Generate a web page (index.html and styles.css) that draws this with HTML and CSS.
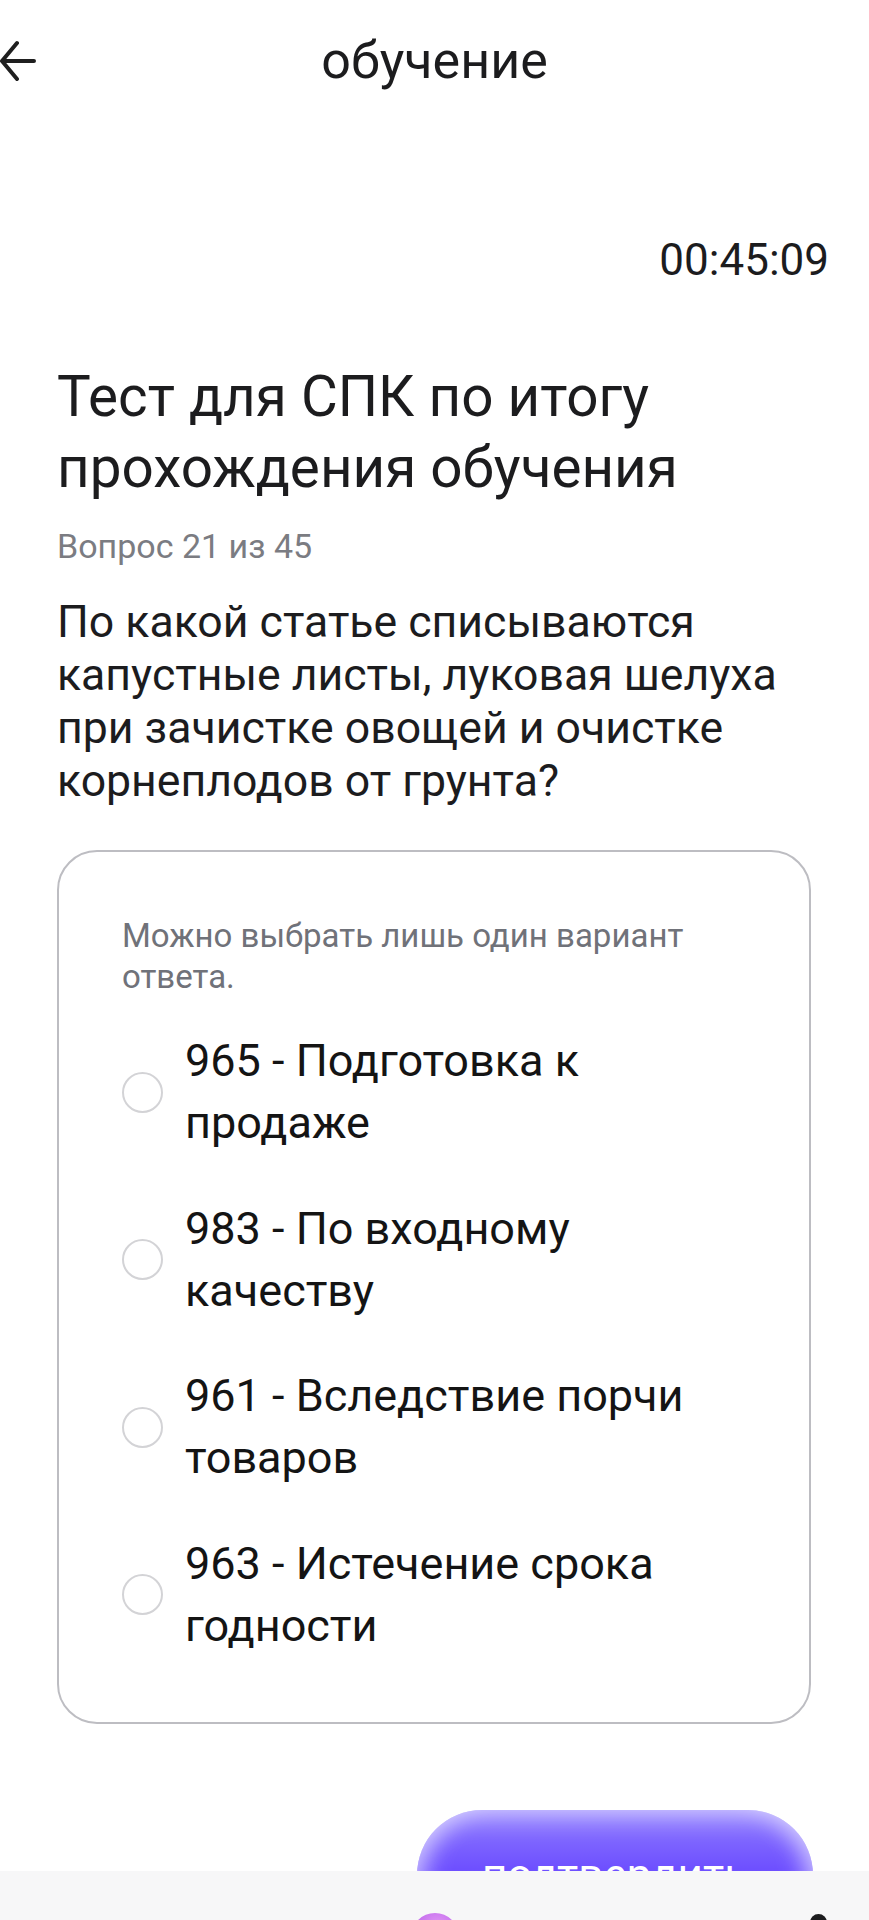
FILE: index.html
```html
<!DOCTYPE html>
<html lang="ru">
<head>
<meta charset="utf-8">
<title>обучение</title>
<link rel="stylesheet" href="styles.css">
</head>
<body>
<header class="topbar">
  <div class="topbar-side">
    <svg class="back" width="40" height="44" viewBox="0 0 40 44" aria-hidden="true">
      <path d="M34 22H2M17 4L2 22L17 40" fill="none" stroke="#1f1f1f" stroke-width="4" stroke-linecap="round" stroke-linejoin="round"/>
    </svg>
  </div>
  <h1 class="topbar-title">обучение</h1>
  <div class="topbar-side"></div>
</header>

<div class="timer">00:45:09</div>

<main class="content">
  <h2 class="test-title">Тест для СПК по итогу прохождения обучения</h2>
  <p class="counter">Вопрос 21 из 45</p>
  <p class="question">По какой статье списываются капустные листы, луковая шелуха при зачистке овощей и очистке корнеплодов от грунта?</p>

  <section class="card">
    <p class="hint">Можно выбрать лишь один вариант ответа.</p>
    <ul class="options">
      <li class="option"><span class="radio"></span><span class="option-text">965 - Подготовка к продаже</span></li>
      <li class="option"><span class="radio"></span><span class="option-text">983 - По входному качеству</span></li>
      <li class="option"><span class="radio"></span><span class="option-text">961 - Вследствие порчи товаров</span></li>
      <li class="option"><span class="radio"></span><span class="option-text">963 - Истечение срока годности</span></li>
    </ul>
  </section>

  <div class="actions">
    <button class="confirm" type="button">подтвердить</button>
  </div>
</main>

<nav class="tabbar">
  <span class="tab"></span>
  <span class="tab"></span>
  <span class="tab"><span class="tab-bubble"></span></span>
  <span class="tab"></span>
  <span class="tab"><span class="tab-head"></span></span>
</nav>
</body>
</html>
```

FILE: styles.css
```css
* { box-sizing: border-box; }

html, body {
  margin: 0;
  padding: 0;
  background: #ffffff;
}

body {
  font-family: Roboto, "Noto Sans", "Liberation Sans", sans-serif;
  color: #1c1c1e;
  width: 869px;
  min-height: 1920px;
}

.topbar {
  display: grid;
  grid-template-columns: 1fr auto 1fr;
  align-items: center;
  height: 122px;
}

.topbar-side {
  display: flex;
  align-items: center;
}

.back {
  display: block;
}

.topbar-title {
  margin: 0;
  font-size: 52px;
  font-weight: 400;
  line-height: 60px;
  color: #1c1c1e;
}

.timer {
  margin-top: 113px;
  padding-right: 40px;
  text-align: right;
  font-size: 44px;
  line-height: 50px;
  color: #1c1c1e;
}

.content {
  padding: 0 58px 0 57px;
}

.test-title {
  margin: 76px 0 0;
  font-size: 56.6px;
  font-weight: 400;
  line-height: 71px;
  color: #1c1c1e;
}

.counter {
  margin: 23px 0 0;
  font-size: 34px;
  line-height: 40px;
  color: #7b7c82;
}

.question {
  margin: 30px 0 0;
  font-size: 44.6px;
  line-height: 53px;
  color: #1c1c1e;
}

.card {
  margin-top: 42px;
  border: 2px solid #bdbdc2;
  border-radius: 40px;
  padding: 63px 63px 65px 63px;
}

.hint {
  margin: 0;
  font-size: 33px;
  line-height: 41px;
  color: #707279;
}

.options {
  list-style: none;
  margin: 33px 0 0;
  padding: 0;
  display: flex;
  flex-direction: column;
  gap: 43.5px;
}

.option {
  display: flex;
  align-items: center;
  gap: 22px;
}

.radio {
  flex: 0 0 41px;
  width: 41px;
  height: 41px;
  border: 2px solid #d3d3d6;
  border-radius: 50%;
}

.option-text {
  font-size: 45px;
  line-height: 62px;
  color: #141414;
}

.actions {
  display: flex;
  justify-content: flex-end;
  margin-top: 86px;
}

.confirm {
  width: 396px;
  height: 130px;
  border: none;
  border-radius: 65px;
  background: linear-gradient(180deg, #8f7cff 0%, #6e50ff 45%, #6a4cff 100%);
  box-shadow: inset 0 14px 22px -4px rgba(255, 255, 255, 0.4),
              inset 20px 0 26px -12px rgba(255, 255, 255, 0.45),
              inset -20px 0 26px -12px rgba(255, 255, 255, 0.45);
  color: #ffffff;
  font-family: Roboto, "Noto Sans", "Liberation Sans", sans-serif;
  font-size: 44px;
  line-height: 52px;
  padding: 0;
  margin-right: -2px;
}

.tabbar {
  position: fixed;
  left: 0;
  right: 0;
  bottom: 0;
  height: 49px;
  background: #f7f7f8;
  overflow: hidden;
  display: flex;
  justify-content: space-between;
  padding: 0 27px;
}

.tab {
  width: 48px;
  display: flex;
  justify-content: center;
}

.tab-bubble {
  margin-top: 42px;
  width: 48px;
  height: 48px;
  border-radius: 50%;
  background: radial-gradient(circle at 55% 30%, #e49af6 0%, #c873ee 45%, #a956e6 100%);
}

.tab-head {
  margin-top: 43px;
  width: 17px;
  height: 17px;
  border-radius: 50%;
  background: #1c1c1e;
}
```
